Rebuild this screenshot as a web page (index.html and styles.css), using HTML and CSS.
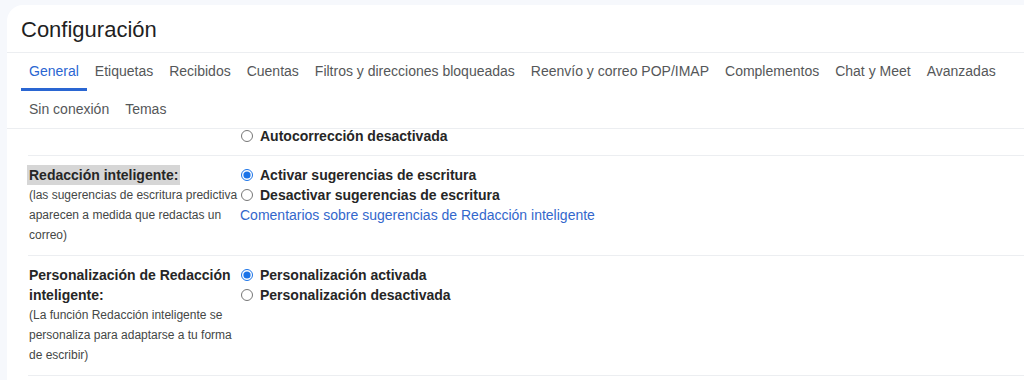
FILE: index.html
```html
<!DOCTYPE html>
<html lang="es">
  <head>
    <meta charset="UTF-8" />
    <meta name="viewport" content="width=device-width, initial-scale=1.0" />
    <title>Configuración</title>
    <link rel="stylesheet" href="styles.css">
  </head>
  <body>
    <div class="panel">
      <div class="head">
        <h1>Configuración</h1>
      </div>

      <nav class="tabs">
        <a class="tab active" href="#">General</a>
        <a class="tab" href="#">Etiquetas</a>
        <a class="tab" href="#">Recibidos</a>
        <a class="tab" href="#">Cuentas</a>
        <a class="tab" href="#">Filtros y direcciones bloqueadas</a>
        <a class="tab" href="#">Reenvío y correo POP/IMAP</a>
        <a class="tab" href="#">Complementos</a>
        <a class="tab" href="#">Chat y Meet</a>
        <a class="tab" href="#">Avanzadas</a>
        <a class="tab" href="#">Sin conexión</a>
        <a class="tab" href="#">Temas</a>
      </nav>

      <div class="content">
        <div class="row cut">
          <div class="label"></div>
          <div class="options">
            <label class="opt"><input type="radio" name="autocorrect" /> Autocorrección desactivada</label>
          </div>
        </div>

        <div class="row">
          <div class="label">
            <span class="title marked">Redacción inteligente:</span>
            <span class="desc">(las sugerencias de escritura predictiva aparecen a medida que redactas un correo)</span>
          </div>
          <div class="options">
            <label class="opt"><input type="radio" name="smart" checked /> Activar sugerencias de escritura</label>
            <label class="opt"><input type="radio" name="smart" /> Desactivar sugerencias de escritura</label>
            <a class="link" href="#">Comentarios sobre sugerencias de Redacción inteligente</a>
          </div>
        </div>

        <div class="row">
          <div class="label">
            <span class="title">Personalización de Redacción inteligente:</span>
            <span class="desc">(La función Redacción inteligente se personaliza para adaptarse a tu forma de escribir)</span>
          </div>
          <div class="options">
            <label class="opt"><input type="radio" name="perso" checked /> Personalización activada</label>
            <label class="opt"><input type="radio" name="perso" /> Personalización desactivada</label>
          </div>
        </div>
      </div>
    </div>
  </body>
</html>
```

FILE: styles.css
```css
body {
  margin: 0;
  padding: 5px 0 0 7px;
  height: 380px;
  box-sizing: border-box;
  overflow: hidden;
  background: #f6f8fc;
  font-family: "Liberation Sans", Arial, sans-serif;
  color: #1f1f1f;
}
.panel {
  background: white;
  border-radius: 16px 0 0 0;
  height: 100%;
  overflow: hidden;
}
.head {
  height: 47px;
  padding-left: 14px;
  border-bottom: 1px solid #eceef1;
}
.head h1 {
  margin: 0;
  font-size: 22px;
  font-weight: 400;
  line-height: 49px;
  color: #1f1f1f;
}
.tabs {
  display: flex;
  flex-wrap: wrap;
  padding-left: 14px;
  border-bottom: 1px solid #eceef1;
}
.tab {
  height: 37.5px;
  line-height: 37px;
  padding: 0 8px;
  font-size: 14px;
  color: #555759;
  text-decoration: none;
  box-sizing: border-box;
}
.tab.active {
  color: #2a66d2;
  border-bottom: 3px solid #2a66d2;
}
.content {
  overflow: hidden;
}
.row {
  display: flex;
  margin-left: 21px;
  padding: 9px 0 10px 1px;
  border-bottom: 1px solid #eceef1;
  line-height: 20px;
  font-size: 14px;
}
.row.cut {
  padding-top: 0;
  padding-bottom: 12px;
  line-height: 14px;
}
.label {
  width: 210px;
  flex-shrink: 0;
  margin-right: 1px;
}
.title {
  font-weight: 700;
  color: #262626;
}
.marked {
  background: #d6d6d6;
  padding: 2px;
  margin-left: -2px;
}
.desc {
  display: block;
  font-size: 12px;
  color: #444746;
}
.options {
  display: flex;
  flex-direction: column;
  align-items: flex-start;
}
.opt {
  display: flex;
  align-items: center;
  font-weight: 700;
  color: #262626;
}
.opt input {
  width: 12px;
  height: 12px;
  margin: 0 7px 0 1px;
  accent-color: #1a73e8;
}
.link {
  color: #3367cc;
  text-decoration: none;
}
```
